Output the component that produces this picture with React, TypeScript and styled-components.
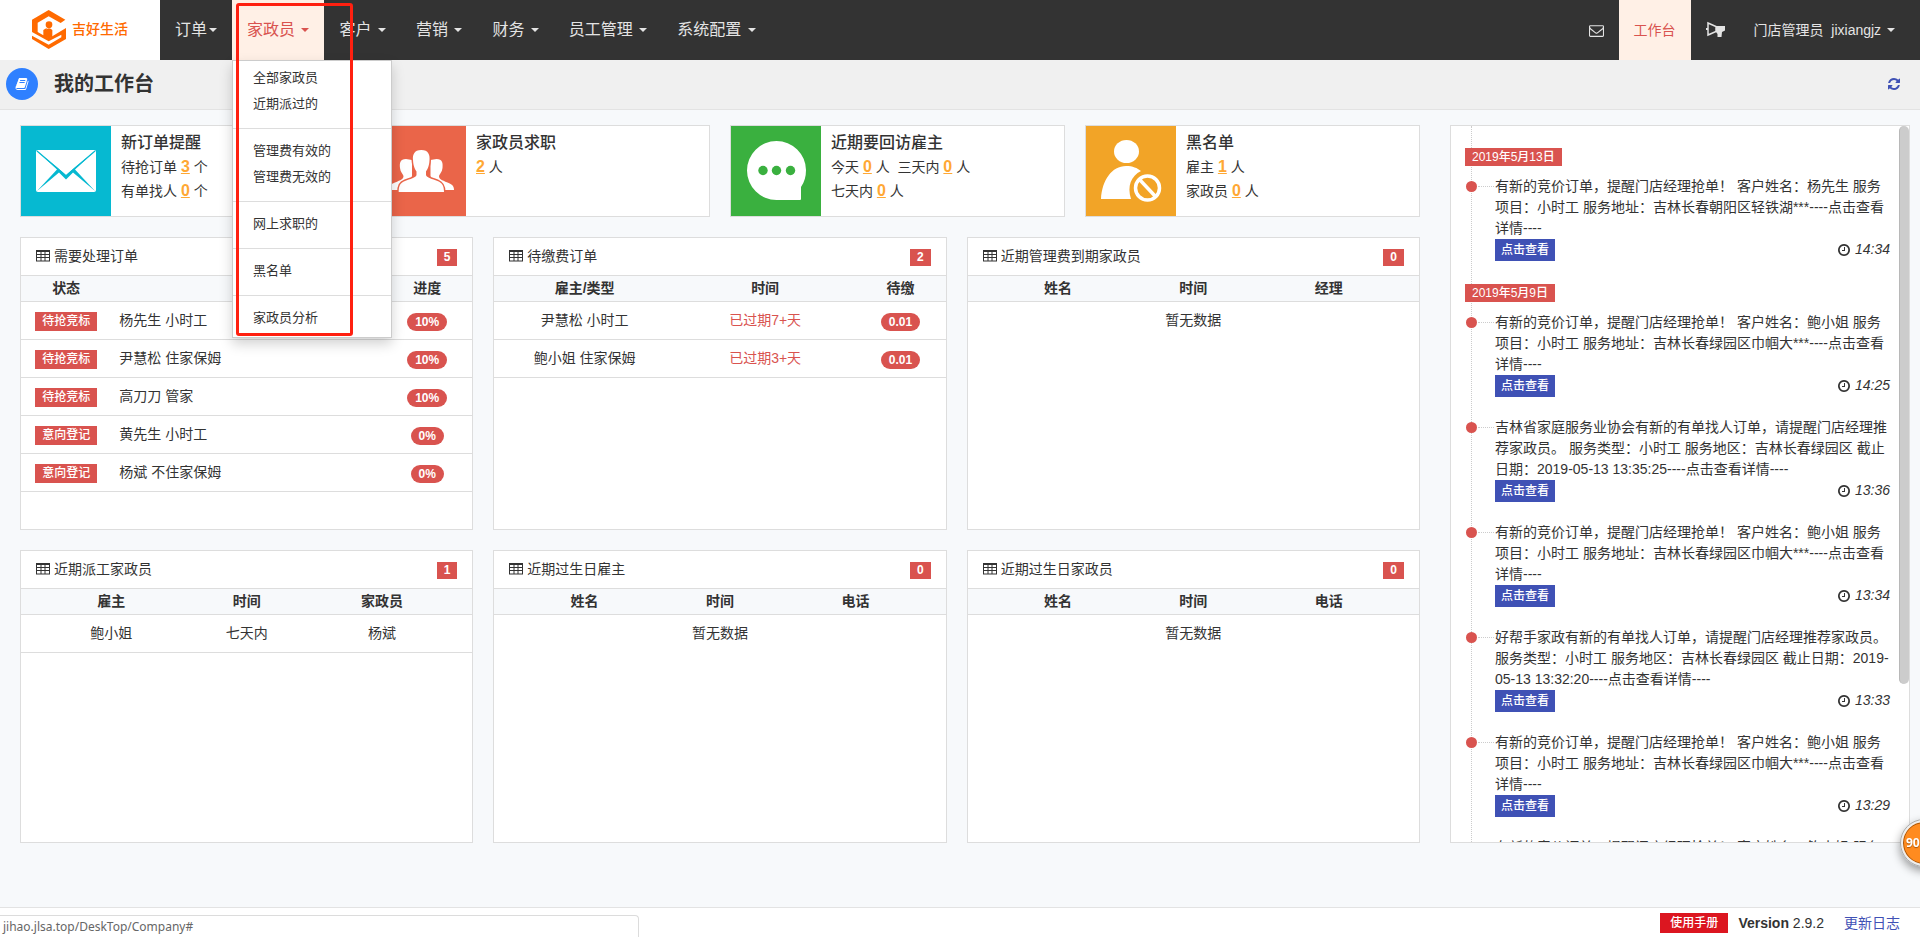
import React from 'react';
import styled, { createGlobalStyle, css } from 'styled-components';

const RED = '#d9534f';
const INDIGO = '#3f51b5';
const LINE = '#dddddd';

const GlobalStyle = createGlobalStyle`
  *, *::before, *::after { box-sizing: border-box; }
  body {
    margin: 0;
    background: #f7f9fb;
    color: #333;
    font-family: "Liberation Sans", "Noto Sans CJK SC", sans-serif;
    font-size: 14px;
    line-height: 20px;
    text-spacing-trim: space-all;
  }
  ul, h1, h2, p { margin: 0; padding: 0; }
  ul { list-style: none; }
  a { text-decoration: none; color: inherit; }
  button { font: inherit; border: 0; cursor: pointer; }
`;

/* ---------- shell ---------- */

const Page = styled.div`
  display: flex;
  flex-direction: column;
  min-height: 100vh;
`;

const TopBar = styled.header`
  display: flex;
  height: 60px;
  background: #333;
  color: #e4e4e4;
`;

const Brand = styled.a`
  display: flex;
  align-items: center;
  gap: 6px;
  width: 160px;
  padding: 0 0 2px 32px;
  background: #fff;
  color: #ff6a00;
  font-weight: 500;
`;

const NavList = styled.ul<{ $end?: boolean }>`
  display: flex;
  ${(p) => p.$end && 'margin-left: auto; padding-right: 10px;'}
`;

const NavEntry = styled.li`
  position: relative;
`;

const NavButton = styled.button<{ $active?: boolean; $small?: boolean }>`
  display: flex;
  align-items: center;
  gap: 2px;
  height: 60px;
  padding: 0 15px;
  background: ${(p) => (p.$active ? '#fff0e6' : 'transparent')};
  color: ${(p) => (p.$active ? RED : 'inherit')};
  font-size: ${(p) => (p.$small ? 14 : 16)}px;
  white-space: pre;
`;

const Caret = styled.span`
  border: 4px solid transparent;
  border-top-color: currentColor;
  border-bottom: 0;
`;

const Dropdown = styled.ul`
  position: absolute;
  z-index: 10;
  top: 60px;
  left: 0;
  width: 160px;
  padding: 5px 0;
  background: #fff;
  border: 1px solid #ccc;
  box-shadow: 0 6px 12px rgba(0, 0, 0, 0.18);
  color: #333;
  font-size: 13px;
`;

const DropdownLink = styled.a`
  display: block;
  padding: 0 20px 2px;
  line-height: 24px;
`;

const Divider = styled.li`
  height: 1px;
  margin: 10px 0;
  background: ${LINE};
`;

const Highlight = styled.div`
  position: absolute;
  z-index: 20;
  top: 3px;
  left: 4px;
  width: 117px;
  height: 333px;
  border: 3px solid #ff2010;
  border-radius: 3px;
  pointer-events: none;
`;

const TitleBar = styled.div`
  display: flex;
  align-items: center;
  height: 50px;
  padding: 0 19px 2px 6px;
  background: #f0f0f0;
  border-bottom: 1px solid #e3e3e3;
`;

const TitleIcon = styled.span`
  display: grid;
  place-items: center;
  width: 32px;
  height: 32px;
  margin-right: 16px;
  border-radius: 50%;
  background: #2f80ff;
  color: #fff;
`;

const Title = styled.h1`
  font-size: 20px;
  line-height: 30px;
`;

const RefreshButton = styled.button`
  display: flex;
  margin-left: auto;
  padding: 0;
  background: none;
  color: ${INDIGO};
`;

const Main = styled.main`
  flex: 1;
  display: grid;
  grid-template-columns: minmax(0, 70fr) minmax(0, 23fr);
  align-items: start;
  align-content: start;
  gap: 30px;
  padding: 15px 10px 30px 20px;
`;

const Board = styled.div`
  display: flex;
  flex-direction: column;
  gap: 20px;
`;

/* ---------- summary cards ---------- */

const CardRow = styled.section`
  display: grid;
  grid-template-columns: repeat(4, minmax(0, 1fr));
  gap: 20px;
`;

const Card = styled.article`
  display: flex;
  height: 92px;
  background: #fff;
  border: 1px solid ${LINE};
`;

const CardArt = styled.div<{ $color: string }>`
  flex: none;
  width: 90px;
  height: 90px;
  background: ${(p) => p.$color};
`;

const CardBody = styled.div`
  padding: 5px 10px;
  line-height: 24px;
  white-space: pre;
`;

const CardTitle = styled.h2`
  font-size: 16px;
  font-weight: 500;
  line-height: 24px;
`;

const Count = styled.a`
  color: #ffa834;
  font-size: 16px;
  font-weight: bold;
  text-decoration: underline;
`;

/* ---------- table panels ---------- */

const PanelGrid = styled.section`
  display: grid;
  grid-template-columns: repeat(3, minmax(0, 1fr));
  gap: 20px;
`;

const Panel = styled.article`
  min-height: 293px;
  background: #fff;
  border: 1px solid ${LINE};
`;

const PanelHead = styled.div`
  display: flex;
  align-items: center;
  gap: 4px;
  height: 38px;
  padding: 0 15px 2px;
  border-bottom: 1px solid ${LINE};
`;

const PanelTitle = styled.h2`
  font-size: 14px;
  font-weight: normal;
`;

const tagBase = css`
  display: inline-block;
  background: ${RED};
  color: #fff;
  font-size: 12px;
  font-weight: bold;
`;

const CountTag = styled.span`
  ${tagBase}
  margin: 4px 0 0 auto;
  padding: 0 7px;
  line-height: 17px;
`;

const StatusTag = styled.span`
  ${tagBase}
  padding: 0 7px;
  font-weight: 500;
  line-height: 19px;
  vertical-align: middle;
`;

const Pill = styled.span`
  ${tagBase}
  padding: 0 8px;
  border-radius: 9px;
  line-height: 18px;
  vertical-align: middle;
`;

const Table = styled.table`
  width: 100%;
  table-layout: fixed;
  border-collapse: separate;
  border-spacing: 0;
  text-align: center;
`;

const HeadCell = styled.th<{ $width: number }>`
  width: ${(p) => p.$width}%;
  height: 26px;
  padding: 0 0 2px;
  background: #f7f9fb;
  border-bottom: 1px solid ${LINE};
`;

const Cell = styled.td<{ $name?: boolean; $alert?: boolean; $bare?: boolean; $tag?: boolean }>`
  height: 38px;
  padding: 0 ${(p) => (p.$name ? 8 : 0)}px ${(p) => (p.$tag ? 0 : 2)}px;
  border-bottom: ${(p) => (p.$bare ? '0' : `1px solid ${LINE}`)};
  text-align: ${(p) => (p.$name ? 'left' : 'center')};
  color: ${(p) => (p.$alert ? RED : 'inherit')};
`;

/* ---------- message feed ---------- */

const Feed = styled.aside`
  position: relative;
  align-self: stretch;
  contain: size;
  overflow: hidden;
  background: #fff;
  border: 1px solid ${LINE};
`;

const FeedList = styled.ul`
  position: relative;
  padding: 19px 19px 0 14px;

  &::before {
    content: "";
    position: absolute;
    top: 0;
    bottom: 0;
    left: 20px;
    border-left: 1px dotted #ccc;
  }
`;

const FeedDate = styled.li`
  position: relative;
  padding: 3px 0 10px;
  line-height: 18px;
`;

const DateTag = styled.span`
  ${tagBase}
  display: block;
  width: fit-content;
  padding: 0 7px;
  font-weight: 500;
`;

const FeedItem = styled.li`
  position: relative;
  height: 105px;
  padding-left: 30px;
  line-height: 21px;

  &::before {
    content: "";
    position: absolute;
    top: 5px;
    left: 1px;
    width: 11px;
    height: 11px;
    border-radius: 50%;
    background: ${RED};
  }

  &::after {
    content: "";
    position: absolute;
    top: 10px;
    left: 13px;
    width: 16px;
    border-top: 1px dotted #ccc;
  }
`;

const FeedFoot = styled.div`
  display: flex;
  align-items: flex-start;
  justify-content: space-between;
`;

const ViewButton = styled.button`
  height: 22px;
  padding: 0 6px;
  background: ${INDIGO};
  color: #fff;
  font-size: 12px;
  font-weight: 500;
`;

const Time = styled.time`
  display: flex;
  align-items: center;
  gap: 4px;
  font-style: italic;
`;

const ScrollThumb = styled.div`
  position: absolute;
  top: 0;
  right: 0;
  width: 10px;
  height: 78%;
  border-radius: 5px;
  background: #ccc;
  border-left: 1px solid #b8b8b8;
`;

/* ---------- footer and overlays ---------- */

const Footer = styled.footer`
  display: flex;
  align-items: center;
  justify-content: flex-end;
  height: 30px;
  padding: 0 20px 0 0;
  background: #fff;
  border-top: 1px solid #e3e3e3;
`;

const ManualLink = styled.a`
  padding: 0 10px;
  background: #dc1620;
  color: #fff;
  font-size: 12px;
  font-weight: 500;
  line-height: 20px;
`;

const Version = styled.p`
  margin: 0 20px 0 10px;
`;

const ChangelogLink = styled.a`
  color: ${INDIGO};
`;

const StatusBubble = styled.div`
  position: fixed;
  left: 0;
  bottom: 0;
  width: 639px;
  height: 22px;
  padding-left: 3px;
  background: #fff;
  border: 1px solid #dcdcdc;
  border-left: 0;
  border-bottom: 0;
  border-top-right-radius: 4px;
  color: #666;
  font: 12px/22px "Noto Sans", sans-serif;
`;

const FloatBall = styled.button`
  position: fixed;
  right: -28px;
  bottom: 70px;
  width: 48px;
  height: 48px;
  padding: 0 0 0 3px;
  border: 3px solid #eee;
  border-radius: 50%;
  outline: 1px solid #aaa;
  outline-offset: -1px;
  background: #ff8b1f;
  box-shadow: inset 0 0 0 1px #a8560c, 0 4px 10px rgba(0, 0, 0, 0.4);
  color: #fff;
  font: bold 12px/16px "Noto Sans", sans-serif;
  text-align: left;
  text-shadow: 0 1px 1px #a8560c;
`;

/* ---------- icons ---------- */

const Glyph = ({ d, size }: { d: string; size: number }) => (
  <svg width={size} height={size} viewBox="0 0 1792 1792" fill="currentColor" aria-hidden="true">
    <path d={d} />
  </svg>
);

const ENVELOPE =
  'M1664 1504v-768q-32 36-69 66-268 206-426 338-51 43-83 67t-86.5 48.5-102.5 24.5h-2q-48 0-102.5-24.5t-86.5-48.5-83-67q-158-132-426-338-37-30-69-66v768q0 13 9.5 22.5t22.5 9.5h1472q13 0 22.5-9.5t9.5-22.5zm0-1051v-24.5l-.5-13-3-12.5-5.5-9-9-7.5-14-2.5h-1472q-13 0-22.5 9.5t-9.5 22.5q0 168 147 284 193 152 401 317 6 5 35 29.5t46 37.5 44.5 31.5 50.5 27.5 43 9h2q20 0 43-9t50.5-27.5 44.5-31.5 46-37.5 35-29.5q208-165 401-317 54-43 100.5-115.5t46.5-131.5zm128-37v1088q0 66-47 113t-113 47h-1472q-66 0-113-47t-47-113v-1088q0-66 47-113t113-47h1472q66 0 113 47t47 113z';
const REFRESH =
  'M1639 1056q0 5-1 7-64 268-268 434.5t-478 166.5q-146 0-282.5-55t-243.5-157l-129 129q-19 19-45 19t-45-19-19-45v-448q0-26 19-45t45-19h448q26 0 45 19t19 45-19 45l-137 137q71 66 161 102t187 36q134 0 250-65t186-179q11-17 53-117 8-23 30-23h192q13 0 22.5 9.5t9.5 22.5zm25-800v448q0 26-19 45t-45 19h-448q-26 0-45-19t-19-45 19-45l138-138q-148-137-349-137-134 0-250 65t-186 179q-11 17-53 117-8 23-30 23h-199q-13 0-22.5-9.5t-9.5-22.5v-7q65-268 270-434.5t480-166.5q146 0 284 55.5t245 156.5l130-129q19-19 45-19t45 19 19 45z';
const CLOCK =
  'M1024 544v448q0 14-9 23t-23 9h-320q-14 0-23-9t-9-23v-64q0-14 9-23t23-9h224v-352q0-14 9-23t23-9h64q14 0 23 9t9 23zm416 352q0-148-73-273t-198-198-273-73-273 73-198 198-73 273 73 273 198 198 273 73 273-73 198-198 73-273zm224 0q0 209-103 385.5t-279.5 279.5-385.5 103-385.5-103-279.5-279.5-103-385.5 103-385.5 279.5-279.5 385.5-103 385.5 103 279.5 279.5 103 385.5z';
const BOOK =
  'M1703 478q40 57 18 129l-275 906q-19 64-76.5 107.5t-122.5 43.5h-923q-77 0-148.5-53.5t-99.5-131.5q-24-67-2-127 0-4 3-27t4-37q1-8-3-21.5t-3-19.5q2-11 8-21t16.5-23.5 16.5-23.5q23-38 45-91.5t30-91.5q3-10 .5-30t-.5-28q3-11 17-28t17-23q21-36 42-92t25-90q1-9-2.500-32t.5-28q4-13 22-30.500t22-22.500q19-26 42.500-84.500t27.500-96.500q1-8-3-25.500t-2-26.500q2-8 9-18t18-23 17-21q8-12 16.500-30.500t15-35 16-36 19.500-32 26.500-23.500 36-11.500 47.500 5.500l-1 3q38-9 51-9h761q74 0 114 56t18 130l-274 906q-36 119-71.500 153.500t-128.500 34.500h-869q-27 0-38 15-11 16-1 43 24 70 144 70h923q29 0 56-15.500t35-41.500l300-987q7-22 5-57 38 15 59 43zm-1064 2q-4 13 2 22.500t20 9.500h608q13 0 25.500-9.500t16.500-22.500l21-64q4-13-2-22.500t-20-9.500h-608q-13 0-25.500 9.500t-16.500 22.500zm-83 256q-4 13 2 22.500t20 9.500h608q13 0 25.500-9.500t16.500-22.500l21-64q4-13-2-22.500t-20-9.500h-608q-13 0-25.500 9.500t-16.500 22.500z';

const Logo = () => (
  <svg width="34" height="39" viewBox="0 0 102 117" fill="#ff6a00" aria-hidden="true">
    <path d="M50 0 L100 29 L86 39 L50 19 L17 38 V66 L34 76 V60 L44 54 V80 L52 84 L102 54 V87 L50 117 L0 87 V77 L50 104 L88 82 V74 L50 94 L0 66 V29Z" />
    <circle cx="51" cy="44" r="10" />
    <path d="M41 60 Q51 50 61 60 V80 L51 86 L41 80Z" />
  </svg>
);

const BullhornSvg = styled.svg`
  overflow: visible;
`;

const Bullhorn = () => (
  <BullhornSvg width="18" height="17" viewBox="0 0 18 17" aria-hidden="true">
    <path d="M2 1 L10 4.500 V9.500 L2 13Z" fill="none" stroke="currentColor" strokeWidth="1.500" />
    <path d="M10 4 H19 V8.500 L16 10 L15.500 15 H11.500 V12 L10 10Z" fill="currentColor" />
    <path d="M0 6h2v2h-2z" fill="currentColor" />
  </BullhornSvg>
);

const GridIcon = () => (
  <svg width="14" height="12" viewBox="0 0 14 12" fill="none" stroke="currentColor" aria-hidden="true">
    <path d="M.5 1 V11 M5 1 V11 M9 1 V11 M13.500 1 V11 M0 4.500 H14 M0 7.500 H14 M0 11 H14" />
    <path d="M0 1 H14" strokeWidth="2" />
  </svg>
);

const MailArt = () => (
  <svg viewBox="0 0 90 90" aria-hidden="true">
    <rect x="15" y="24" width="60" height="42" rx="2" fill="#fff" />
    <path d="M16 25 L37 43 L45 50 L53 43 L74 25" fill="none" stroke="#06b9d1" strokeWidth="1.200" />
    <path d="M16 25 L36 43.500 L16 65 L38 46.500 L45 53.500 L52 46.500 L74 65 L54 43.500 L74 25 L52.500 42.500 L45 49 L37.500 42.500Z" fill="#06b9d1" />
  </svg>
);

const PeopleArt = () => (
  <svg viewBox="0 0 90 90" fill="#fff" aria-hidden="true">
    <path d="M30 33 C24 33 23.500 37 24 42 C24.300 46 27 48 27.500 50 C27.500 53 25 54 19 56.500 C14 58.500 12.500 60 12.500 64 H30 L36 50 V34Z" />
    <path d="M60.500 33 C66.500 33 67 37 66.500 42 C66.200 46 63.500 48 63 50 C63 53 65.500 54 71.500 56.500 C76.500 58.500 78 60 78 64 H60 L54.500 50 V34Z" />
    <path
      d="M45.300 24 C38 24 36.500 29 37 34 C37.300 41 39.500 44 40.500 45.500 V49 C40 51.500 34 53 29 55 C24 57 22.700 60 22.700 66 H68 C68 60 66.500 57 61.500 55 C56.500 53 50.500 51.500 50 49 V45.500 C51 44 53.200 41 53.500 34 C54 29 52.500 24 45.300 24Z"
      stroke="#ea6549"
      strokeWidth="3"
      paintOrder="stroke"
    />
  </svg>
);

const ChatArt = () => (
  <svg viewBox="0 0 90 90" aria-hidden="true">
    <path d="M45.500 15 A29.500 29.500 0 0 1 75 44 Q75 54 70 61 V73 Q70 74 69 74 H45.500 A29.500 29.500 0 0 1 45.500 15Z" fill="#fff" />
    <g fill="#3ab03f">
      <circle cx="32" cy="44.500" r="4.700" />
      <circle cx="45.500" cy="44.500" r="4.700" />
      <circle cx="59.500" cy="44.500" r="4.700" />
    </g>
  </svg>
);

const BlockedArt = () => (
  <svg viewBox="0 0 90 90" aria-hidden="true">
    <ellipse cx="40.500" cy="25.500" rx="12.500" ry="11.500" fill="#fff" />
    <path d="M15 73 C16 54 26 40 40 40 C47 40 51 42 55 45 C45 50 41 60 45 73Z" fill="#fff" />
    <circle cx="61.500" cy="62" r="12" fill="none" stroke="#fff" strokeWidth="3.500" />
    <path d="M54 54 L69 70" stroke="#fff" strokeWidth="3.500" />
  </svg>
);

/* ---------- data ---------- */

const menuGroups = [
  ['全部家政员', '近期派过的'],
  ['管理费有效的', '管理费无效的'],
  ['网上求职的'],
  ['黑名单'],
  ['家政员分析'],
];

const laterMenus = ['客户', '营销', '财务', '员工管理', '系统配置'];

type Part = string | number;

const cards: { title: string; color: string; art: React.ReactNode; lines: Part[][] }[] = [
  { title: '新订单提醒', color: '#06b9d1', art: <MailArt />, lines: [['待抢订单 ', 3, ' 个'], ['有单找人 ', 0, ' 个']] },
  { title: '家政员求职', color: '#ea6549', art: <PeopleArt />, lines: [[2, ' 人']] },
  { title: '近期要回访雇主', color: '#3ab03f', art: <ChatArt />, lines: [['今天 ', 0, ' 人  三天内 ', 0, ' 人'], ['七天内 ', 0, ' 人']] },
  { title: '黑名单', color: '#f2a427', art: <BlockedArt />, lines: [['雇主 ', 1, ' 人'], ['家政员 ', 0, ' 人']] },
];

type Kind = 'text' | 'name' | 'status' | 'pill' | 'alert';

const panels: { title: string; count: number; heads: string[]; widths: number[]; kinds: Kind[]; rows: string[][] }[] = [
  {
    title: '需要处理订单',
    count: 5,
    heads: ['状态', '雇主', '进度'],
    widths: [20, 60, 20],
    kinds: ['status', 'name', 'pill'],
    rows: [
      ['待抢竞标', '杨先生 小时工', '10%'],
      ['待抢竞标', '尹慧松 住家保姆', '10%'],
      ['待抢竞标', '高刀刀 管家', '10%'],
      ['意向登记', '黄先生 小时工', '0%'],
      ['意向登记', '杨斌 不住家保姆', '0%'],
    ],
  },
  {
    title: '待缴费订单',
    count: 2,
    heads: ['雇主/类型', '时间', '待缴'],
    widths: [40, 40, 20],
    kinds: ['text', 'alert', 'pill'],
    rows: [
      ['尹慧松 小时工', '已过期7+天', '0.01'],
      ['鲍小姐 住家保姆', '已过期3+天', '0.01'],
    ],
  },
  { title: '近期管理费到期家政员', count: 0, heads: ['姓名', '时间', '经理'], widths: [40, 20, 40], kinds: [], rows: [] },
  {
    title: '近期派工家政员',
    count: 1,
    heads: ['雇主', '时间', '家政员'],
    widths: [40, 20, 40],
    kinds: ['text', 'text', 'text'],
    rows: [['鲍小姐', '七天内', '杨斌']],
  },
  { title: '近期过生日雇主', count: 0, heads: ['姓名', '时间', '电话'], widths: [40, 20, 40], kinds: [], rows: [] },
  { title: '近期过生日家政员', count: 0, heads: ['姓名', '时间', '电话'], widths: [40, 20, 40], kinds: [], rows: [] },
];

const bid = (name: string, place: string) =>
  `有新的竞价订单，提醒门店经理抢单！ 客户姓名：${name} 服务项目：小时工 服务地址：吉林长春${place}***----点击查看详情----`;

const feed: { date: string; items: { text: string; time: string }[] }[] = [
  { date: '2019年5月13日', items: [{ text: bid('杨先生', '朝阳区轻铁湖'), time: '14:34' }] },
  {
    date: '2019年5月9日',
    items: [
      { text: bid('鲍小姐', '绿园区巾帼大'), time: '14:25' },
      {
        text: '吉林省家庭服务业协会有新的有单找人订单，请提醒门店经理推荐家政员。 服务类型：小时工 服务地区：吉林长春绿园区 截止日期：2019-05-13 13:35:25----点击查看详情----',
        time: '13:36',
      },
      { text: bid('鲍小姐', '绿园区巾帼大'), time: '13:34' },
      {
        text: '好帮手家政有新的有单找人订单，请提醒门店经理推荐家政员。 服务类型：小时工 服务地区：吉林长春绿园区 截止日期：2019-05-13 13:32:20----点击查看详情----',
        time: '13:33',
      },
      { text: bid('鲍小姐', '绿园区巾帼大'), time: '13:29' },
      { text: bid('鲍小姐', '绿园区巾帼大'), time: '13:28' },
    ],
  },
];

/* ---------- page ---------- */

const renderCell = (kind: Kind, value: string, key: number) => {
  if (kind === 'status') return <Cell key={key} $tag><StatusTag>{value}</StatusTag></Cell>;
  if (kind === 'pill') return <Cell key={key} $tag><Pill>{value}</Pill></Cell>;
  return <Cell key={key} $name={kind === 'name'} $alert={kind === 'alert'}>{value}</Cell>;
};

export default function App() {
  return (
    <Page>
      <GlobalStyle />
      <TopBar>
        <Brand href="#"><Logo />吉好生活</Brand>
        <NavList>
          <NavEntry><NavButton>订单<Caret /></NavButton></NavEntry>
          <NavEntry>
            <NavButton $active>{'家政员 '}<Caret /></NavButton>
            <Dropdown>
              {menuGroups.map((group, g) => (
                <React.Fragment key={g}>
                  {g > 0 && <Divider />}
                  {group.map((label) => (
                    <li key={label}><DropdownLink href="#">{label}</DropdownLink></li>
                  ))}
                </React.Fragment>
              ))}
            </Dropdown>
            <Highlight />
          </NavEntry>
          {laterMenus.map((label) => (
            <NavEntry key={label}><NavButton>{`${label} `}<Caret /></NavButton></NavEntry>
          ))}
        </NavList>
        <NavList $end>
          <NavEntry><NavButton $small aria-label="消息"><Glyph d={ENVELOPE} size={15} /></NavButton></NavEntry>
          <NavEntry><NavButton $small $active>工作台</NavButton></NavEntry>
          <NavEntry><NavButton $small aria-label="公告"><Bullhorn /></NavButton></NavEntry>
          <NavEntry><NavButton $small>{'门店管理员  jixiangjz '}<Caret /></NavButton></NavEntry>
        </NavList>
      </TopBar>

      <TitleBar>
        <TitleIcon><Glyph d={BOOK} size={14} /></TitleIcon>
        <Title>我的工作台</Title>
        <RefreshButton aria-label="刷新"><Glyph d={REFRESH} size={14} /></RefreshButton>
      </TitleBar>

      <Main>
        <Board>
          <CardRow>
            {cards.map((card) => (
              <Card key={card.title}>
                <CardArt $color={card.color}>{card.art}</CardArt>
                <CardBody>
                  <CardTitle>{card.title}</CardTitle>
                  {card.lines.map((line, i) => (
                    <p key={i}>
                      {line.map((part, j) => (typeof part === 'number' ? <Count key={j} href="#">{part}</Count> : part))}
                    </p>
                  ))}
                </CardBody>
              </Card>
            ))}
          </CardRow>
          <PanelGrid>
            {panels.map((panel) => (
              <Panel key={panel.title}>
                <PanelHead>
                  <GridIcon />
                  <PanelTitle>{panel.title}</PanelTitle>
                  <CountTag>{panel.count}</CountTag>
                </PanelHead>
                <Table>
                  <thead>
                    <tr>
                      {panel.heads.map((head, i) => <HeadCell key={head} $width={panel.widths[i]}>{head}</HeadCell>)}
                    </tr>
                  </thead>
                  <tbody>
                    {panel.rows.map((row, r) => (
                      <tr key={r}>{row.map((value, i) => renderCell(panel.kinds[i], value, i))}</tr>
                    ))}
                    {panel.rows.length === 0 && <tr><Cell $bare colSpan={3}>暂无数据</Cell></tr>}
                  </tbody>
                </Table>
              </Panel>
            ))}
          </PanelGrid>
        </Board>

        <Feed>
          <FeedList>
            {feed.map((day) => (
              <React.Fragment key={day.date}>
                <FeedDate><DateTag>{day.date}</DateTag></FeedDate>
                {day.items.map((item) => (
                  <FeedItem key={item.time}>
                    <p>{item.text}</p>
                    <FeedFoot>
                      <ViewButton>点击查看</ViewButton>
                      <Time><Glyph d={CLOCK} size={14} />{item.time}</Time>
                    </FeedFoot>
                  </FeedItem>
                ))}
              </React.Fragment>
            ))}
          </FeedList>
          <ScrollThumb />
        </Feed>
      </Main>

      <Footer>
        <ManualLink href="#">使用手册</ManualLink>
        <Version><b>Version</b> 2.9.2</Version>
        <ChangelogLink href="#">更新日志</ChangelogLink>
      </Footer>

      <StatusBubble>jihao.jlsa.top/DeskTop/Company#</StatusBubble>
      <FloatBall>90</FloatBall>
    </Page>
  );
}
